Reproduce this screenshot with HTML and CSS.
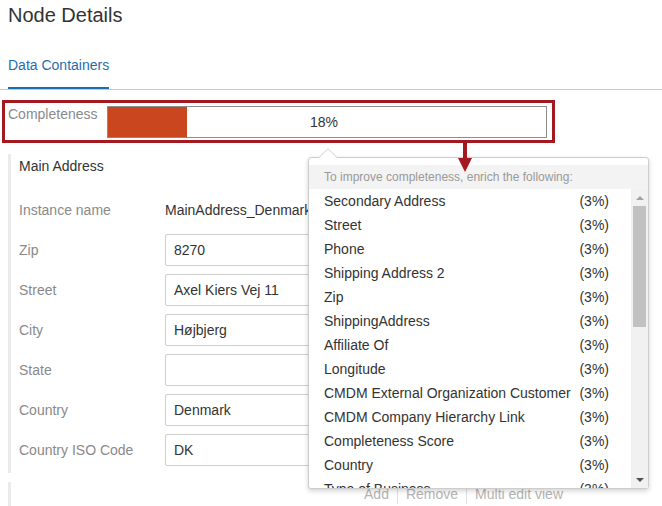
FILE: index.html
```html
<!DOCTYPE html>
<html>
<head>
    <meta charset="utf-8">
    <title>Node Details</title>
    <meta name="viewport" content="width=device-width, initial-scale=1">
    <link rel="stylesheet" href="styles.css">
</head>
<body>
    <div class="page">
        <h1 class="title">Node Details</h1>
        <div class="tabs">
            <a class="tab active">Data Containers</a>
        </div>

        <div class="completeness">
            <span class="completeness-label">Completeness</span>
            <div class="bar">
                <div class="bar-fill" style="width: 18%"></div>
                <span class="bar-text">18%</span>
            </div>
        </div>

        <div class="container-card">
            <div class="card-title">Main Address</div>
            <div class="field">
                <span class="field-label">Instance name</span>
                <span class="field-value">MainAddress_Denmark</span>
            </div>
            <div class="field">
                <span class="field-label">Zip</span>
                <input class="field-input" value="8270">
            </div>
            <div class="field">
                <span class="field-label">Street</span>
                <input class="field-input" value="Axel Kiers Vej 11">
            </div>
            <div class="field">
                <span class="field-label">City</span>
                <input class="field-input" value="Højbjerg">
            </div>
            <div class="field">
                <span class="field-label">State</span>
                <input class="field-input" value="">
            </div>
            <div class="field">
                <span class="field-label">Country</span>
                <input class="field-input" value="Denmark">
            </div>
            <div class="field">
                <span class="field-label">Country ISO Code</span>
                <input class="field-input" value="DK">
            </div>
        </div>

        <div class="container-card next">
            <div class="actions">
                <a class="action">Add</a>
                <a class="action">Remove</a>
                <a class="action">Multi edit view</a>
            </div>
        </div>

        <!-- completeness popover -->
        <div class="popover">
            <div class="popover-head">To improve completeness, enrich the following:</div>
            <div class="popover-body">
                <ul class="missing-list">
                    <li><span>Secondary Address</span><span>(3%)</span></li>
                    <li><span>Street</span><span>(3%)</span></li>
                    <li><span>Phone</span><span>(3%)</span></li>
                    <li><span>Shipping Address 2</span><span>(3%)</span></li>
                    <li><span>Zip</span><span>(3%)</span></li>
                    <li><span>ShippingAddress</span><span>(3%)</span></li>
                    <li><span>Affiliate Of</span><span>(3%)</span></li>
                    <li><span>Longitude</span><span>(3%)</span></li>
                    <li><span>CMDM External Organization Customer</span><span>(3%)</span></li>
                    <li><span>CMDM Company Hierarchy Link</span><span>(3%)</span></li>
                    <li><span>Completeness Score</span><span>(3%)</span></li>
                    <li><span>Country</span><span>(3%)</span></li>
                    <li><span>Type of Business</span><span>(3%)</span></li>
                    <li><span>Latitude</span><span>(3%)</span></li>
                </ul>
                <div class="scrollbar">
                    <span class="scroll-up"></span>
                    <div class="scroll-track"><div class="scroll-thumb"></div></div>
                    <span class="scroll-down"></span>
                </div>
            </div>
        </div>

        <svg class="annot-arrow" width="16" height="30" viewBox="0 0 16 30">
            <rect x="5" y="0" width="4" height="16" fill="#a3191f"/>
            <polygon points="0,15 14,15 7,29" fill="#a3191f"/>
        </svg>
    </div>
</body>
</html>
```

FILE: styles.css
```css
body {
    margin: 0;
    font-family: "Liberation Sans", Arial, sans-serif;
    font-size: 14px;
    line-height: 20px;
    color: #333;
    background-color: #fff;
}
.page {
    position: relative;
    height: 506px;
    overflow: hidden;
}
.title {
    margin: 0;
    padding: 3px 8px 0;
    font-size: 20px;
    font-weight: normal;
    line-height: 24px;
    color: #333;
}
.tabs {
    display: flex;
    border-bottom: 1px solid #c8c8c8;
}
.tab {
    margin-left: 8px;
    padding: 28px 0 12px;
    color: #1f6db1;
    border-bottom: 2px solid #1f6db1;
}
.completeness {
    display: flex;
    align-items: flex-start;
    margin: 10px 0 0 2px;
    width: 553px;
    height: 43px;
    padding: 0 5px 0 3px;
    box-sizing: border-box;
    border: 3px solid #a3191f;
}
.completeness-label {
    width: 99px;
    margin-top: 1px;
    color: #8a8a8a;
}
.bar {
    position: relative;
    flex: 1;
    height: 32px;
    margin-top: 3px;
    border: 1px solid #8c8c8c;
    box-sizing: border-box;
}
.bar-fill {
    height: 100%;
    background-color: #c9461f;
}
.bar-text {
    position: absolute;
    top: 5px;
    left: 0;
    right: 6px;
    text-align: center;
    color: #333;
}
.container-card {
    margin: 11px 0 0 8px;
    padding: 2px 0 7px 8px;
    border-left: 3px solid #ebebeb;
}
.card-title {
    margin-bottom: 18px;
}
.field {
    display: flex;
    align-items: center;
    height: 32px;
    margin-bottom: 8px;
}
.field:last-child {
    margin-bottom: 0;
}
.field-label {
    width: 146px;
    color: #8a8a8a;
}
.field-value {
    white-space: nowrap;
}
.field-input {
    width: 330px;
    height: 32px;
    box-sizing: border-box;
    padding: 0 8px;
    border: 1px solid #cfcfcf;
    border-radius: 2px;
    font-family: inherit;
    font-size: 14px;
    color: #333;
}
.container-card.next {
    margin-top: 9px;
    height: 40px;
    padding-bottom: 0;
}
.actions {
    display: flex;
    justify-content: flex-end;
    padding-right: 91px;
}
.action {
    padding: 0 8px;
    color: #b5b5b5;
    border-left: 1px solid #e0e0e0;
}
.action:first-child {
    border-left: none;
}

/* popover */
.popover {
    position: absolute;
    left: 308px;
    top: 157px;
    width: 341px;
    height: 332px;
    box-sizing: border-box;
    background-color: #fff;
    border: 1px solid #cdcdcd;
    border-radius: 3px;
    box-shadow: 0 2px 5px rgba(0,0,0,0.18);
    padding-top: 7px;
    z-index: 2;
}
.popover::before,
.popover::after {
    content: "";
    position: absolute;
    left: 9px;
    top: -10px;
    border: 10px solid transparent;
    border-top: none;
    border-bottom-color: #cdcdcd;
}
.popover::after {
    top: -9px;
    border-bottom-color: #fff;
}
.popover-head {
    height: 24px;
    padding-left: 15px;
    background-color: #f3f3f3;
    font-size: 12px;
    line-height: 24px;
    color: #999;
}
.popover-body {
    display: flex;
    height: 299px;
    overflow: hidden;
}
.missing-list {
    flex: 1;
    margin: 0;
    padding: 0 22px 0 15px;
    list-style: none;
}
.missing-list li {
    display: flex;
    justify-content: space-between;
    gap: 4px;
    height: 24px;
    line-height: 24px;
    white-space: nowrap;
}
.scrollbar {
    display: flex;
    flex-direction: column;
    align-items: center;
    width: 17px;
    background-color: #f1f1f1;
}
.scroll-up,
.scroll-down {
    width: 0;
    height: 0;
    margin: 7px 0 6px;
    border: 4px solid transparent;
}
.scroll-up {
    border-top: none;
    border-bottom-color: #a3a3a3;
}
.scroll-down {
    border-bottom: none;
    border-top-color: #505050;
}
.scroll-track {
    flex: 1;
    width: 100%;
}
.scroll-thumb {
    height: 121px;
    margin: 0 2px 0 2px;
    background-color: #c1c1c1;
}

.annot-arrow {
    position: absolute;
    left: 458px;
    top: 143px;
    z-index: 3;
}
```
